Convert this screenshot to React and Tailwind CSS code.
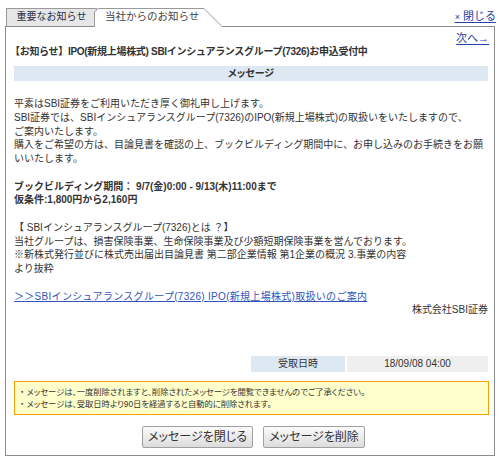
import React from 'react';

const link = 'text-[#2140a8] underline underline-offset-2';

const bodyLines = [
  { t: '平素はSBI証券をご利用いただき厚く御礼申し上げます。' },
  { t: 'SBI証券では、SBIインシュアランスグループ(7326)のIPO(新規上場株式)の取扱いをいたしますので、' },
  { t: 'ご案内いたします。' },
  { t: '購入をご希望の方は、目論見書を確認の上、ブックビルディング期間中に、お申し込みのお手続きをお願' },
  { t: 'いいたします。' },
  { t: '' },
  { t: 'ブックビルディング期間： 9/7(金)0:00 - 9/13(木)11:00まで', bold: true },
  { t: '仮条件:1,800円から2,160円', bold: true },
  { t: '' },
  { t: '【 SBIインシュアランスグループ(7326)とは ？】' },
  { t: '当社グループは、損害保険事業、生命保険事業及び少額短期保険事業を営んでおります。' },
  { t: '※新株式発行並びに株式売出届出目論見書 第二部企業情報 第1企業の概況 3.事業の内容' },
  { t: 'より抜粋' },
  { t: '' },
];

export default function App() {
  return (
    <div className="w-[500px] h-[461px] bg-white text-[#333] font-['Liberation_Sans','Noto_Sans_CJK_JP',sans-serif]">
      {/* Tabs */}
      <div className="flex items-end h-[26px] pl-[6px]">
        <div className="h-[18px] w-[91px] bg-[#e6e6e6] border border-b-0 border-[#999] text-[10px] leading-[16px] text-center text-[#2a2f4a]">
          重要なお知らせ
        </div>
        <div className="relative z-10 -mb-px -ml-[3px] h-[19px] w-[130px]">
          <svg className="absolute inset-0" width="130" height="19" viewBox="0 0 130 19">
            <path d="M0.5,19 L0.5,4 L4,0.5 L110,0.5 L128.5,19 Z" fill="#fff" />
            <path d="M0.5,19 L0.5,4 L4,0.5 L110,0.5 L128,18.5" fill="none" stroke="#999" />
          </svg>
          <span className="relative block pl-[11px] text-[10.5px] leading-[17px] text-[#444]">当社からのお知らせ</span>
        </div>
        <div className="flex-1 self-stretch flex justify-end items-start pt-[10px] pr-[4px]">
          <a href="#" className={`${link} text-[11px] leading-[12px]`}>
            <span className="text-[9px]">×</span> 閉じる
          </a>
        </div>
      </div>

      {/* Main box */}
      <div className="ml-[5px] w-[490px] h-[430px] border border-[#8c8c8c] flex flex-col">
        <div className="flex justify-end pr-[5px] pt-[5px] text-[11px] leading-[13px]">
          <a href="#" className={link}>次へ→</a>
        </div>
        <div className="pl-[4px] text-[10px] leading-[13px] font-bold tracking-[-0.3px] whitespace-nowrap">
          【お知らせ】IPO(新規上場株式) SBIインシュアランスグループ(7326)お申込受付中
        </div>

        <div className="mt-[8px] ml-[8px] mr-[6px] h-[15px] bg-[#dde8f3] text-center text-[10px] leading-[15px] font-bold [font-feature-settings:'palt']">
          メッセージ
        </div>

        {/* Body */}
        <div className="mt-[16px] ml-[8px] mr-[6px] text-[10px] leading-[13.75px] whitespace-nowrap">
          {bodyLines.map((l, i) => (
            <div key={i} className={`h-[13.75px] ${l.bold ? 'font-bold' : ''}`}>{l.t}</div>
          ))}
          <div className="h-[13.75px]">
            <a href="#" className="text-[#3355bb] underline tracking-[0.3px]">＞＞SBIインシュアランスグループ(7326) IPO(新規上場株式)取扱いのご案内</a>
          </div>
          <div className="h-[13.75px] text-right">株式会社SBI証券</div>
        </div>

        {/* Received date */}
        <div className="mt-[39px] mr-[6px] flex justify-end gap-[2px] text-[10px] leading-[16px] h-[16px]">
          <div className="w-[94px] bg-[#dde8f3] text-center">受取日時</div>
          <div className="w-[141px] bg-[#efefef] text-center">18/09/08 04:00</div>
        </div>

        {/* Notice */}
        <div className="mt-[9px] ml-[8px] mr-[5px] h-[34px] border border-[#f5a300] bg-[#ffffcc] pl-[5px] pt-[4px] text-[8.3px] leading-[12px] [font-feature-settings:'palt'] whitespace-nowrap">
          <div>・ メッセージは、一度削除されますと、削除されたメッセージを閲覧できませんのでご了承ください。</div>
          <div>・ メッセージは、受取日時より90日を経過すると自動的に削除されます。</div>
        </div>

        {/* Buttons */}
        <div className="mt-[11px] ml-[136px] flex gap-[10px]">
          <button className="h-[22px] w-[111px] border border-[#a0a0a0] rounded-[2px] bg-gradient-to-b from-[#fbfbfb] to-[#dcdcdc] text-[12px] text-[#333] [font-feature-settings:'palt']">
            メッセージを閉じる
          </button>
          <button className="h-[22px] w-[102px] border border-[#a0a0a0] rounded-[2px] bg-gradient-to-b from-[#fbfbfb] to-[#dcdcdc] text-[12px] text-[#333] [font-feature-settings:'palt']">
            メッセージを削除
          </button>
        </div>
      </div>
    </div>
  );
}
